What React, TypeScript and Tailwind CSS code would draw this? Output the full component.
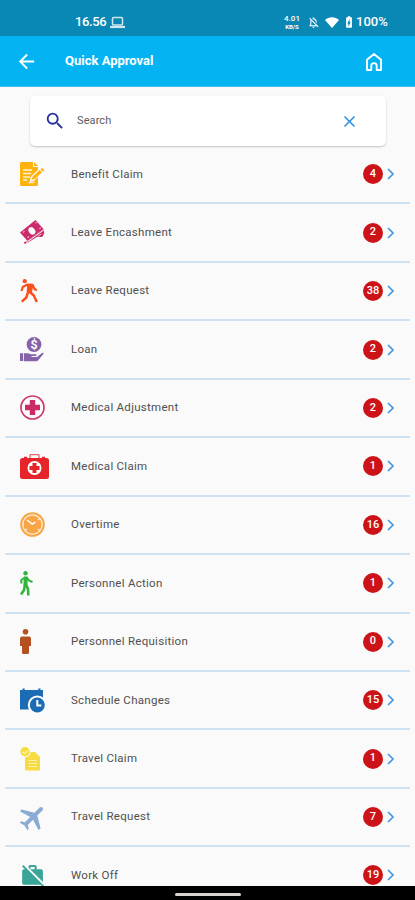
import React from 'react';
import { MdArrowBack, MdSearch, MdClose, MdWorkOff, MdLocalAirport, MdBatteryChargingFull, MdOutlineNotificationsOff } from 'react-icons/md';

const BenefitIcon = () => (
  <svg width="25" height="24" viewBox="0 0 25 24">
    <path d="M1.500 0H13v5h5v17.500a1.500 1.500 0 0 1-1.500 1.500h-15A1.500 1.500 0 0 1 0 22.500v-21A1.500 1.500 0 0 1 1.500 0z" fill="#ffb30f" />
    <path d="M14.200 0l4 4h-4z" fill="#ffb30f" />
    <path d="M3 8h9M3 11.500h8M3 15h7M3 18h4" stroke="#fff3d6" strokeWidth="1.300" />
    <path d="M9.500 20l1.500-5.500L20 6l3.500 3.500L14 19z" fill="#fafafa" />
    <path d="M11.500 18l1.200-3.500 7-6.500 2.300 2.300-6.800 6.500zM20.500 7.200l1.500-1.500 2.500 2.500-1.500 1.500z" fill="#ffb30f" />
    <path d="M8.500 21c2-1 3 .6 6-1" stroke="#fff3d6" strokeWidth="1.200" fill="none" />
  </svg>
);

const EncashmentIcon = () => (
  <svg width="25" height="25" viewBox="0 0 25 25">
    <path d="M0 12.500L15.500 0 23.500 9 7.500 21z" fill="#cb2a6b" />
    <path d="M4 22l3.500-.8L23.500 9l.8 4-2 4-5-.3-8.500 5.300-4.300 2z" fill="#cb2a6b" />
    <path d="M6.500 22.500L24 9.800" stroke="#fafafa" strokeWidth="1" />
    <ellipse cx="11.900" cy="10.900" rx="3.100" ry="4" fill="#fafafa" transform="rotate(-38 11.900 10.900)" />
    <path d="M3 12.500l1.500-1.200M15.500 3.200l1.200-.8M7.500 17.700l1.500-1.200M19.500 8.700l1.200-1" stroke="#f5b5ce" strokeWidth="1.200" />
    <path d="M18 16.300l3.500-2.500" stroke="#f5b5ce" strokeWidth="1" />
  </svg>
);

const LeaveIcon = () => (
  <svg width="24" height="24" viewBox="0 0 24 24" fill="none" stroke="#f9501c" strokeLinejoin="round">
    <circle cx="4.700" cy="2.200" r="2.100" fill="#f9501c" stroke="none" />
    <path d="M1.500 12l1.200-4L7.500 5.600l5 .2 2 4.200 2.300 1.300" strokeWidth="2.200" />
    <path d="M8 6l4.500.2-1.300 7-3.700-.8z" fill="#f9501c" strokeWidth="1.600" />
    <path d="M9 12.300l4.800 4.200 3 6.500M8.300 12.500l-2 6-4.500 4.200" strokeWidth="2.500" />
  </svg>
);

const LoanIcon = () => (
  <svg width="25" height="25" viewBox="0 0 25 25">
    <circle cx="14" cy="7.500" r="7.400" fill="#8562a9" />
    <text x="14" y="12" textAnchor="middle" fontSize="12.500" fontWeight="700" fontFamily="Roboto, sans-serif" fill="#fafafa">$</text>
    <path d="M0 16.200h3.200V24H0zM4 16.200h4l3 1h4.500c1.500 0 1.500 1.700 0 1.900h-4v.8h5.500L22 16c1.300-.5 2 .3 1.200 1.300L18 23.500l-1.500.7H4z" fill="#8562a9" />
  </svg>
);

const MedicalAdjustmentIcon = () => (
  <svg width="25" height="25" viewBox="0 0 25 25">
    <circle cx="12.500" cy="12.500" r="11.500" fill="none" stroke="#cf3870" strokeWidth="1.700" />
    <path d="M9.800 5h5.400v4.800H20v5.400h-4.800V20H9.800v-4.800H5V9.800h4.800z" fill="#cb2a66" />
  </svg>
);

const MedicalClaimIcon = () => (
  <svg width="29" height="25" viewBox="0 0 29 25">
    <path d="M10 4V1.500a1 1 0 0 1 1-1h7a1 1 0 0 1 1 1V4" fill="none" stroke="#e2686b" strokeWidth="1.300" />
    <path d="M2.500 4h24A2.500 2.500 0 0 1 29 6.500v16a2.500 2.500 0 0 1-2.500 2.500h-24A2.500 2.500 0 0 1 0 22.500v-16A2.500 2.500 0 0 1 2.500 4z" fill="#e6252b" />
    <path d="M4 3.500h3M22 3.500h3" stroke="#e6252b" strokeWidth="1.400" />
    <circle cx="14.500" cy="14" r="7" fill="#fff" />
    <path d="M12.500 9h4v3h3v4h-3v3h-4v-3h-3v-4h3z" fill="#e6252b" />
  </svg>
);

const OvertimeIcon = () => (
  <svg width="25" height="25" viewBox="0 0 25 25">
    <circle cx="12.500" cy="12.500" r="12.300" fill="#f9a545" />
    <circle cx="12.500" cy="12.500" r="9.700" fill="none" stroke="#fff0dc" strokeWidth="1.300" />
    <path d="M7 8l5.300 4 3.200-1.800" stroke="#fff" strokeWidth="1.500" fill="none" />
    <path d="M5.500 18.500l1.500-1.500M19.500 18.500L18 17M19.500 6.500L18 8" stroke="#fff0dc" strokeWidth="1.200" />
  </svg>
);

const PersonnelActionIcon = () => (
  <svg width="13" height="25" viewBox="0 0 13 25" fill="none" stroke="#31b43b" strokeLinejoin="round">
    <circle cx="5.500" cy="2.300" r="2.200" fill="#31b43b" stroke="none" />
    <path d="M5.800 5.500L5.400 15" strokeWidth="4" />
    <path d="M5 6.500L1.300 9v3.500M6.500 6.800l2.900 3 3.100 1.200" strokeWidth="2" />
    <path d="M5 14l-1 5-3 4.500M6.200 14l1.800 4 .3 6.500" strokeWidth="2.600" />
  </svg>
);

const PersonnelRequisitionIcon = () => (
  <svg width="11" height="25" viewBox="0 0 11 25" fill="#b4501f">
    <circle cx="5.500" cy="2.800" r="2.800" />
    <path d="M2 7.500h7a2 2 0 0 1 2 2V17H9v6.500A1.500 1.500 0 0 1 7.500 25h-4A1.500 1.500 0 0 1 2 23.500V17H0V9.500a2 2 0 0 1 2-2z" />
  </svg>
);

const ScheduleIcon = () => (
  <svg width="25" height="25" viewBox="0 0 25 25">
    <path d="M0 2h2.500V.5h2.200V2h13.600V.5h2.200V2H23v5H0zM0 5h23v16.500H0z" fill="#1b6cb5" />
    <circle cx="17.300" cy="17" r="9.500" fill="#fafafa" />
    <circle cx="17.300" cy="17" r="7.500" fill="#1b6cb5" />
    <path d="M17.300 12v5.500h4" stroke="#fff" strokeWidth="2" fill="none" />
  </svg>
);

const TravelClaimIcon = () => (
  <svg width="21" height="24" viewBox="0 0 21 24">
    <path d="M5 5h10.500v4.500H20V22a1.500 1.500 0 0 1-1.500 1.500h-12A1.500 1.500 0 0 1 5 22z" fill="#f8dc3f" />
    <path d="M15 5l5 5h-5z" fill="#f8dc3f" />
    <circle cx="5" cy="4.700" r="5.600" fill="#fafafa" />
    <circle cx="5" cy="4.700" r="4.700" fill="#f8dc3f" />
    <path d="M2.500 5l2 1.500 3.500-3" stroke="#fff6bf" strokeWidth="1.200" fill="none" />
    <path d="M8.500 13.500h8.500M8.500 16.500h8.500M8.500 19.500h8.500" stroke="#fff3ad" strokeWidth="1" />
  </svg>
);

const items = [
  { name: 'Benefit Claim', count: 4, icon: <BenefitIcon /> },
  { name: 'Leave Encashment', count: 2, icon: <EncashmentIcon /> },
  { name: 'Leave Request', count: 38, icon: <LeaveIcon /> },
  { name: 'Loan', count: 2, icon: <LoanIcon /> },
  { name: 'Medical Adjustment', count: 2, icon: <MedicalAdjustmentIcon /> },
  { name: 'Medical Claim', count: 1, icon: <MedicalClaimIcon /> },
  { name: 'Overtime', count: 16, icon: <OvertimeIcon /> },
  { name: 'Personnel Action', count: 1, icon: <PersonnelActionIcon /> },
  { name: 'Personnel Requisition', count: 0, icon: <PersonnelRequisitionIcon /> },
  { name: 'Schedule Changes', count: 15, icon: <ScheduleIcon /> },
  { name: 'Travel Claim', count: 1, icon: <TravelClaimIcon /> },
  { name: 'Travel Request', count: 7, icon: <MdLocalAirport className="-ml-[3px] h-[32px] w-[32px] rotate-45 text-[#8babd4]" /> },
  { name: 'Work Off', count: 19, icon: <MdWorkOff className="h-[25px] w-[25px] text-[#38a598]" /> },
];

const StatusBar = () => (
  <div className="flex h-9 shrink-0 items-start bg-[#0a88b5] pt-[14px] text-[13px] leading-4 font-medium text-white">
    <span className="ml-[75px] w-[32px] tracking-[-0.4px]">16.56</span>
    <svg className="mt-[2px] ml-[3px] opacity-80" width="15" height="13" viewBox="0 0 15 13" fill="none" stroke="#fff">
      <rect x="2.500" y="1.500" width="10" height="7.500" rx="1" strokeWidth="1.500" />
      <path d="M0 11h15" strokeWidth="2.200" />
    </svg>
    <div className="ml-auto flex items-start">
      <div className="mr-[6px] w-[18px] text-center">
        <div className="text-[8px] leading-[9px]">4.01</div>
        <div className="text-[6px] leading-[7px] font-bold">KB/S</div>
      </div>
      <MdOutlineNotificationsOff className="mt-[2px] mr-[5px] h-[13px] w-[13px]" />
      <svg className="mt-[3px] mr-[3px]" width="14" height="11" viewBox="0 0 14 11">
        <path d="M0 3C4-.8 10-.8 14 3L7 11z" fill="#fff" />
      </svg>
      <MdBatteryChargingFull className="mt-[1px] h-[14px] w-[14px]" />
      <span className="mr-[26px] w-[33px]">100%</span>
    </div>
  </div>
);

const AppBar = () => (
  <header className="flex h-[51px] shrink-0 items-center border-b border-[#43bdf0] bg-[#03b3f2] text-white">
    <MdArrowBack className="ml-[15px] h-[23px] w-[23px]" />
    <h1 className="ml-[27px] text-[13px] font-bold">Quick Approval</h1>
    <svg className="mt-px mr-[32px] ml-auto" width="18" height="20" viewBox="0 0 18 20" fill="none" stroke="#fff" strokeWidth="1.900" strokeLinejoin="round">
      <path d="M2 7.800L9 2l7 5.800V18h-4.300v-4.200a2.700 2.700 0 0 0-5.400 0V18H2z" />
    </svg>
  </header>
);

const App = () => {
  return (
    <div className="flex h-[900px] w-[415px] flex-col overflow-hidden bg-[#fafafa] font-['Roboto',sans-serif]">
      <StatusBar />
      <AppBar />
      <main className="min-h-0 flex-1 overflow-hidden pt-[9px]">
        <div className="mr-[29px] ml-[30px] flex h-[50px] items-center rounded-[5px] bg-white shadow-[0_1px_2px_rgba(0,0,0,0.22)]">
          <MdSearch className="ml-[14px] h-[22px] w-[22px] text-[#2330a0]" />
          <span className="ml-[11px] pt-px text-[11px] tracking-[0.1px] text-[#5c5c5c]">Search</span>
          <MdClose className="mr-[27px] ml-auto h-[19px] w-[19px] text-[#2f8ee0]" />
        </div>
        <ul>
          {items.map((item) => (
            <li key={item.name} className="mx-[5px] flex h-[58.450px] items-center border-b-2 border-[#cfe2f4]">
              <div className="ml-[15px] flex w-[51px] items-center">{item.icon}</div>
              <span className="text-[11.500px] tracking-[0.280px] text-[#505050]">{item.name}</span>
              <span className="mr-[4px] ml-auto flex h-5 w-5 items-center justify-center rounded-full bg-[#cc1418] text-[11px] font-medium text-white">
                {item.count}
              </span>
              <svg className="mr-[16px]" width="7" height="12" viewBox="0 0 7 12" fill="none" stroke="#4497e0" strokeWidth="1.700">
                <path d="M1 1l5 5-5 5" />
              </svg>
            </li>
          ))}
        </ul>
      </main>
      <div className="flex h-[14px] shrink-0 justify-center bg-black pt-[7px]">
        <div className="h-[3px] w-[66px] rounded-full bg-[#d6d3d0]" />
      </div>
    </div>
  );
};

export default App;
